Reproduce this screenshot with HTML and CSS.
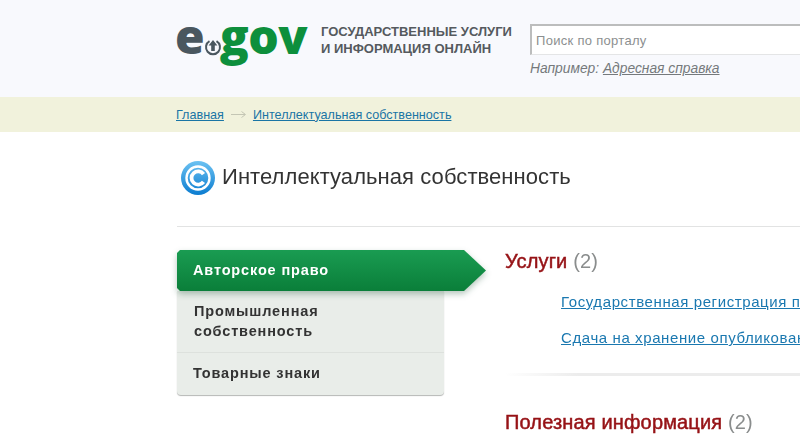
FILE: index.html
```html
<!DOCTYPE html>
<html lang="ru">
<head>
<meta charset="utf-8">
<title>Интеллектуальная собственность</title>
<link rel="stylesheet" href="styles.css">
</head>
<body>
<div class="shot">
<header class="header">
  <div class="logo">
    <span class="logo-e">e</span>
    <svg class="logo-mark" viewBox="0 0 18 18" width="18" height="18" aria-hidden="true">
      <path d="M5.5 3.2 A7 7 0 1 0 12.5 3.2" fill="none" stroke="#4a575f" stroke-width="2"/>
      <path d="M9 2 L13.4 7.4 H10.8 V13 H7.2 V7.4 H4.6 Z" fill="#4a575f"/>
    </svg>
    <span class="logo-gov">gov</span>
  </div>
  <div class="tagline">ГОСУДАРСТВЕННЫЕ УСЛУГИ<br>И ИНФОРМАЦИЯ ОНЛАЙН</div>
  <div class="search">
    <div class="search-box">Поиск по порталу</div>
    <div class="search-hint">Например: <a class="hint-link" href="#">Адресная справка</a></div>
  </div>
</header>
<nav class="crumbs">
  <a class="crumb" href="#">Главная</a>
  <svg class="crumb-arrow" viewBox="0 0 29 9" width="29" height="9" aria-hidden="true">
    <path d="M7 4.5 H21 M17.5 1.5 L21.5 4.5 L17.5 7.5" fill="none" stroke="#c4c6b4" stroke-width="1"/>
  </svg>
  <a class="crumb" href="#">Интеллектуальная собственность</a>
</nav>
<main class="page">
  <div class="title-row">
    <svg class="title-icon" viewBox="0 0 36 36" width="36" height="36" aria-hidden="true">
      <defs>
        <linearGradient id="ball" x1="0" y1="0" x2="0" y2="1">
          <stop offset="0" stop-color="#6cc2f2"/>
          <stop offset="1" stop-color="#0b7cd0"/>
        </linearGradient>
      </defs>
      <circle cx="18" cy="18" r="17" fill="url(#ball)"/>
      <circle cx="18" cy="18" r="11.5" fill="none" stroke="#fff" stroke-width="2.4"/>
      <path d="M23.5 14.2 A6.6 6.6 0 1 0 23.5 21.8" fill="none" stroke="#fff" stroke-width="3.8"/>
    </svg>
    <h1 class="title">Интеллектуальная собственность</h1>
  </div>
  <div class="rule"></div>
  <div class="columns">
    <aside class="side">
      <div class="tab-wrap">
        <div class="tab">
          <span>Авторское право</span>
        </div>
      </div>
      <ul class="menu">
        <li class="menu-item">Промышленная<br>собственность</li>
        <li class="menu-item">Товарные знаки</li>
      </ul>
    </aside>
    <section class="content">
      <h2 class="heading">Услуги <span class="count">(2)</span></h2>
      <ul class="links">
        <li class="link-row"><a class="link" href="#">Государственная регистрация прав на объекты авторского права</a></li>
        <li class="link-row"><a class="link" href="#">Сдача на хранение опубликованных произведений</a></li>
      </ul>
      <div class="fade-rule"></div>
      <h2 class="heading">Полезная информация <span class="count">(2)</span></h2>
    </section>
  </div>
</main>
</div>
</body>
</html>
```
FILE: styles.css
```css
* { box-sizing: border-box; }
html, body { margin: 0; padding: 0; height: 445px; overflow: hidden; background: #fff; }
body { width: 800px; font-family: "Liberation Sans", Arial, sans-serif; color: #333; }
ul { list-style: none; margin: 0; padding: 0; }
a { color: inherit; }

.shot { width: 800px; height: 445px; overflow: hidden; filter: blur(0.4px); }

.header {
  height: 97px;
  background: #f8f9fd;
  padding: 17px 0 0 175px;
  display: flex;
  align-items: flex-start;
}
.logo {
  width: 146px;
  height: 50px;
  display: flex;
  align-items: flex-start;
  font-family: "Open Sans", "DejaVu Sans", sans-serif;
  font-weight: 800;
  font-size: 48px;
  line-height: 38px;
  flex: none;
}
.logo-e { color: #4a575f; }
.logo-mark { margin: 21px 0 0 -1px; flex: none; }
.logo-gov { color: #0d8f3c; margin-left: -2px; letter-spacing: -0.5px; }

.tagline {
  padding-top: 6px;
  width: 209px;
  flex: none;
  font-size: 13px;
  line-height: 17px;
  font-weight: bold;
  color: #555a5e;
  white-space: nowrap;
}
.search { flex: 1; min-width: 0; padding-top: 7px; }
.search-box {
  width: 300px;
  height: 31px;
  background: #fff;
  border: 2px solid #bcbdbd;
  border-right: 0;
  border-bottom: 1px solid #e4e5e6;
  padding-left: 4px;
  font-size: 13px;
  line-height: 29px;
  color: #8c8f90;
  letter-spacing: 0.3px;
}
.search-hint {
  margin-top: 6px;
  font-size: 13.8px;
  line-height: 16px;
  font-style: italic;
  color: #75797c;
}
.hint-link { color: #75797c; text-decoration: underline; }

.crumbs {
  height: 35px;
  background: #f1f2dc;
  padding-left: 176px;
  display: flex;
  align-items: center;
  font-size: 12.6px;
  color: #1a75a5;
}
.crumb { color: #1a75a5; text-decoration: underline; }
.crumb-arrow { flex: none; }

.page { padding-left: 177px; }
.title-row {
  height: 94px;
  display: flex;
  align-items: center;
  padding: 0 0 2px 3px;
}
.title-icon { flex: none; margin-right: 6px; }
.title {
  margin: 0 0 2px;
  font-weight: normal;
  font-size: 22px;
  line-height: 26px;
  letter-spacing: 0.07px;
  color: #333;
  white-space: nowrap;
}
.rule { height: 1px; background: #e2e3e3; margin-bottom: 23px; }

.columns { display: flex; align-items: flex-start; }
.side { width: 310px; flex: none; }
.tab-wrap {
  position: relative;
  z-index: 1;
  width: 309px;
  filter: drop-shadow(0 3px 3px rgba(10, 70, 35, 0.3));
}
.tab {
  height: 41px;
  padding-left: 16px;
  display: flex;
  align-items: center;
  color: #fff;
  font-size: 14.5px;
  font-weight: bold;
  letter-spacing: 0.85px;
  background: linear-gradient(#1a9c52, #0a7e39);
  clip-path: polygon(3px 0, 287px 0, 100% 50%, 287px 100%, 3px 100%, 0 calc(100% - 3px), 0 3px);
}
.tab span { margin-top: -1px; }
.menu {
  width: 267px;
  background: #e9ede9;
  border-radius: 0 0 4px 4px;
  box-shadow: 0 1px 1px #b5b7b5;
  color: #333;
  font-size: 14.5px;
  font-weight: bold;
  letter-spacing: 0.85px;
}
.menu-item {
  padding: 10px 17px 11px;
  line-height: 20px;
  white-space: nowrap;
}
.menu-item + .menu-item {
  border-top: 1px solid #dde1dd;
  padding: 10px 16px 12px;
}

.content { flex: 1; min-width: 0; padding: 0 0 0 18px; margin-top: -1px; }
.heading {
  margin: 0;
  font-size: 20px;
  line-height: 24px;
  font-weight: normal;
  letter-spacing: 0.15px;
  color: #961216;
  white-space: nowrap;
  -webkit-text-stroke: 0.5px #961216;
}
.count { color: #8a8d8d; -webkit-text-stroke: 0; }
.links { padding: 19px 0 0 56px; }
.link-row { height: 36px; white-space: nowrap; }
.link { font-size: 15px; line-height: 20px; letter-spacing: 0.6px; color: #1a78b0; text-decoration: underline; }
.fade-rule {
  height: 3px;
  margin-top: 9px;
  margin-bottom: 34px;
  background: linear-gradient(90deg, #fff, #ececec 25%);
}
```
